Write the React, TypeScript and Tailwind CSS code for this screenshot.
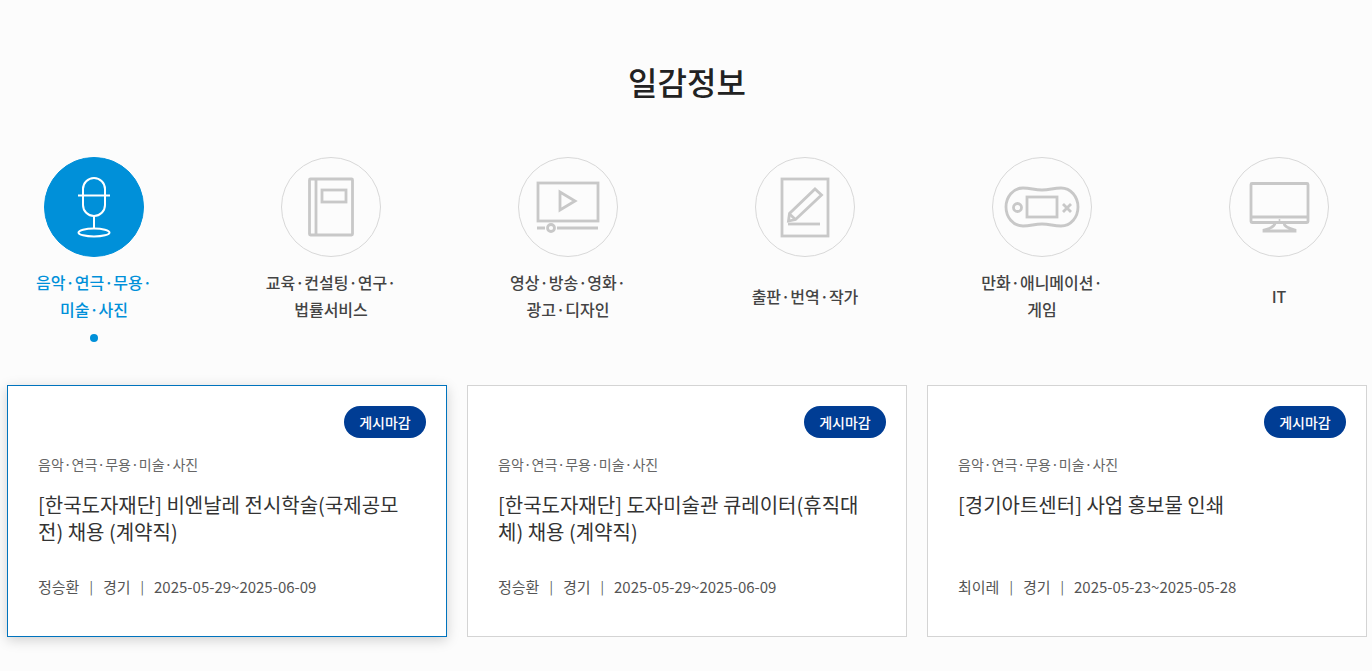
const font = "font-['Noto_Sans_CJK_KR','Noto_Sans',sans-serif]";

function MicIcon() {
  return (
    <svg width="100" height="100" viewBox="0 0 100 100" fill="none" stroke="#fff" strokeWidth="2">
      <path d="M39 32a11 11 0 0 1 22 0v16a11 11 0 0 1-22 0Z" />
      <path d="M34 38.500h32" />
      <path d="M50 59v12" />
      <ellipse cx="50" cy="75.500" rx="15.500" ry="4" />
    </svg>
  );
}

function BookIcon() {
  return (
    <svg width="100" height="100" viewBox="0 0 100 100" fill="none" stroke="#c8c8c8" strokeWidth="2.800">
      <rect x="28.500" y="22" width="43" height="56" rx="1" />
      <path d="M35 22v56" />
      <rect x="41" y="33" width="24" height="12" />
    </svg>
  );
}

function VideoIcon() {
  return (
    <svg width="100" height="100" viewBox="0 0 100 100" fill="none" stroke="#c8c8c8" strokeWidth="2.800">
      <rect x="20" y="26" width="60" height="38" />
      <path d="M42 35v18l15-9Z" />
      <path d="M19 71h8M39 71h41" />
      <circle cx="33" cy="71" r="3.500" />
    </svg>
  );
}

function WriteIcon() {
  return (
    <svg width="100" height="100" viewBox="0 0 100 100" fill="none" stroke="#c8c8c8" strokeWidth="2.800">
      <rect x="27" y="22" width="46" height="57" />
      <path d="M33.500 64l1-7.500L60 32l6.500 6-26 24.500Z" />
      <path d="M34.500 57l6 5.500" />
      <path d="M33 67h32" />
    </svg>
  );
}

function GameIcon() {
  return (
    <svg width="100" height="100" viewBox="0 0 100 100" fill="none" stroke="#c8c8c8" strokeWidth="2.800">
      <path d="M31 31c8 0 11 2 19 2s11-2 19-2c10 0 17 9 17 19s-7 19-17 19c-8 0-11-2-19-2s-11 2-19 2c-10 0-17-9-17-19s7-19 17-19Z" />
      <rect x="35" y="40" width="30" height="20" />
      <circle cx="25.500" cy="50.500" r="4" />
      <path d="M71 47l8 8M79 47l-8 8" />
    </svg>
  );
}

function MonitorIcon() {
  return (
    <svg width="100" height="100" viewBox="0 0 100 100" fill="none" stroke="#c8c8c8" strokeWidth="2.800">
      <rect x="22" y="26.500" width="57" height="39" rx="1" />
      <path d="M22 60h57" />
      <path d="M46 66c0 3-3 5-11 7v1h31v-1c-8-2-11-4-11-7" />
      <circle cx="50.500" cy="63" r="1" fill="#c8c8c8" stroke="none" />
    </svg>
  );
}

const cats = [
  { lines: ["음악·연극·무용·", "미술·사진"], Icon: MicIcon, active: true },
  { lines: ["교육·컨설팅·연구·", "법률서비스"], Icon: BookIcon },
  { lines: ["영상·방송·영화·", "광고·디자인"], Icon: VideoIcon },
  { lines: ["출판·번역·작가"], Icon: WriteIcon },
  { lines: ["만화·애니메이션·", "게임"], Icon: GameIcon },
  { lines: ["IT"], Icon: MonitorIcon },
];

const cards = [
  { title: "[한국도자재단] 비엔날레 전시학술(국제공모전) 채용 (계약직)", who: "정승환", date: "2025-05-29~2025-06-09", hover: true },
  { title: "[한국도자재단] 도자미술관 큐레이터(휴직대체) 채용 (계약직)", who: "정승환", date: "2025-05-29~2025-06-09" },
  { title: "[경기아트센터] 사업 홍보물 인쇄", who: "최이레", date: "2025-05-23~2025-05-28" },
];

export default function App() {
  return (
    <div className={`h-[671px] overflow-hidden bg-[#fcfcfc] pr-[5px] pl-[7px] ${font}`}>
      <h2 className="pt-[57px] text-center text-[32px] leading-[48px] font-medium text-[#222]">일감정보</h2>

      <ul className="mt-[52px] flex justify-between pr-px">
        {cats.map(({ lines, Icon, active }) => (
          <li key={lines[0]} className="flex w-[174px] flex-col items-center">
            <div
              className={`flex h-[100px] w-[100px] items-center justify-center rounded-full border ${
                active ? "border-[#0090d9] bg-[#0090d9]" : "border-[#d8d8d8]"
              }`}
            >
              <div className="h-[100px] w-[100px] shrink-0">
                <Icon />
              </div>
            </div>
            <div
              className={`mt-3 flex h-[54px] flex-col justify-center text-center text-base leading-[27px] font-medium whitespace-nowrap ${
                active ? "text-[#0090d9]" : "text-[#444]"
              }`}
            >
              {lines.map((l) => (
                <span key={l}>{l}</span>
              ))}
            </div>
            {active && <span className="mt-[11px] h-2 w-2 rounded-full bg-[#0090d9]" />}
          </li>
        ))}
      </ul>

      <div className="mt-[43px] flex gap-5">
        {cards.map((c) => (
          <div
            key={c.title}
            className={`flex h-[252px] w-[440px] flex-col border bg-white pt-5 pr-5 pl-[30px] ${
              c.hover ? "border-[#0073bd] shadow-[0_3px_12px_rgba(0,0,0,0.18)]" : "border-[#d4d4d4]"
            }`}
          >
            <div className="flex justify-end">
              <span className="flex h-8 w-[82px] items-center justify-center rounded-full bg-[#003d94] text-sm font-medium text-white">
                게시마감
              </span>
            </div>
            <p className="mt-[14px] text-sm leading-[24px] text-[#666]">음악·연극·무용·미술·사진</p>
            <p className="mt-[15px] h-[54px] w-[370px] text-[20px] leading-[27px] break-all text-[#333]">{c.title}</p>
            <p className="mt-[30px] flex items-center text-[15px] leading-[24px] text-[#555]">
              {c.who}
              <span className="px-[10px] text-[13px]">|</span>
              경기
              <span className="px-[10px] text-[13px]">|</span>
              {c.date}
            </p>
          </div>
        ))}
      </div>
    </div>
  );
}
